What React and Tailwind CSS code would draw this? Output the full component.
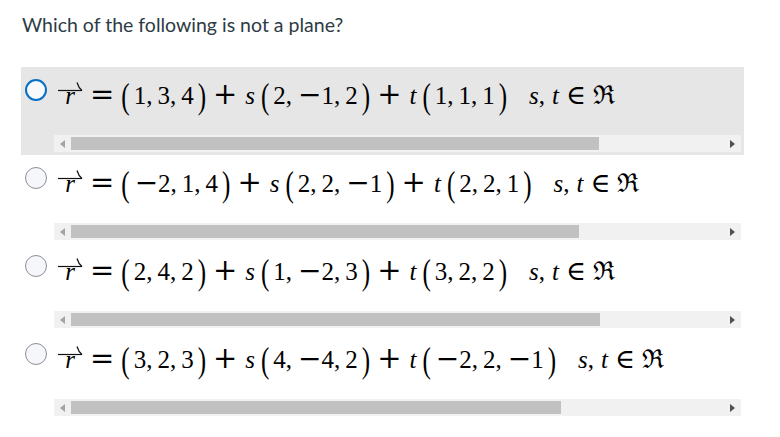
const options = [
  { a: ["1", "3", "4"], b: ["2", "−1", "2"], c: ["1", "1", "1"], thumb: 528, selected: true },
  { a: ["−2", "1", "4"], b: ["2", "2", "−1"], c: ["2", "2", "1"], thumb: 508 },
  { a: ["2", "4", "2"], b: ["1", "−2", "3"], c: ["3", "2", "2"], thumb: 529 },
  { a: ["3", "2", "3"], b: ["4", "−4", "2"], c: ["−2", "2", "−1"], thumb: 490 },
];

const sym = "font-['DejaVu_Serif',serif] font-light";

function Paren({ children }) {
  return (
    <span className="inline-block leading-none scale-y-[1.45] origin-center px-[1px]">{children}</span>
  );
}

function Num({ v }) {
  if (v.startsWith("−")) {
    return (
      <span className="inline-flex items-baseline">
        <span className={`${sym} text-[28px] ml-[1px]`}>−</span>
        <span>{v.slice(1)}</span>
      </span>
    );
  }
  return <span>{v}</span>;
}

function Tuple({ items }) {
  return (
    <span className="inline-flex items-baseline">
      <Paren>(</Paren>
      <span className="ml-[3px]" />
      {items.map((v, i) => (
        <span key={i} className="inline-flex items-baseline">
          <Num v={v} />
          {i < items.length - 1 && <span className="mr-[5px]">,</span>}
        </span>
      ))}
      <span className="mr-[3px]" />
      <Paren>)</Paren>
    </span>
  );
}

function VecR() {
  return (
    <span className="relative inline-block w-[26px] text-center italic leading-none">
      r
      <svg className="absolute left-0 top-[-2px]" width="26" height="11" viewBox="0 0 26 11" fill="none">
        <path d="M1 9.5H25" stroke="#111" strokeWidth="1.2" />
        <path d="M25 9.5C22.5 7.5 21 5 20 1.5" stroke="#111" strokeWidth="1.2" />
      </svg>
    </span>
  );
}

function Expr({ o }) {
  return (
    <div className="flex items-baseline font-['Liberation_Serif','Times_New_Roman',serif] text-[25px] leading-[25px] text-black whitespace-nowrap">
      <VecR />
      <span className={`${sym} text-[29px] ml-[7px] mr-[6px]`}>=</span>
      <Tuple items={o.a} />
      <span className={`${sym} text-[29px] ml-[6px] mr-[8px]`}>+</span>
      <span className="italic mr-[5px]">s</span>
      <Tuple items={o.b} />
      <span className={`${sym} text-[29px] ml-[6px] mr-[8px]`}>+</span>
      <span className="italic mr-[5px]">t</span>
      <Tuple items={o.c} />
      <span className="ml-[21px] italic">s</span>
      <span className="mr-[7px]">,</span>
      <span className="italic">t</span>
      <span className={`${sym} text-[27px] ml-[7px] mr-[7px]`}>∈</span>
      <span className="font-['DejaVu_Serif',serif] text-[26px]">ℜ</span>
    </div>
  );
}

function Radio({ selected }) {
  return selected ? (
    <div className="w-[22px] h-[22px] rounded-full border-[2.5px] border-[#0770c7] bg-[#f7f9fd] shrink-0" />
  ) : (
    <div className="w-[22px] h-[22px] rounded-full border-[1.5px] border-[#8c8f94] bg-[#f6f7fb] shrink-0" />
  );
}

function Scrollbar({ thumb }) {
  return (
    <div className="ml-[33px] w-[687px] h-[17px] bg-[#f1f1f1] flex items-center">
      <div className="w-[17px] h-full flex items-center justify-center">
        <svg width="5" height="8" viewBox="0 0 5 8">
          <polygon points="5,0 5,8 0,4" fill="#a3a3a3" />
        </svg>
      </div>
      <div className="h-[13px] bg-[#c1c1c1]" style={{ width: thumb }} />
      <div className="flex-1" />
      <div className="w-[17px] h-full flex items-center justify-center">
        <svg width="5" height="8" viewBox="0 0 5 8">
          <polygon points="0,0 0,8 5,4" fill="#505050" />
        </svg>
      </div>
    </div>
  );
}

function Option({ o }) {
  return (
    <div className={`h-[88px] flex flex-col ${o.selected ? "bg-[#e6e6e6]" : ""}`}>
      <div className="h-[68px] flex items-start">
        <div className="mt-[12px] ml-[4px]">
          <Radio selected={o.selected} />
        </div>
        <div className="ml-[10px] mt-[15px]">
          <Expr o={o} />
        </div>
      </div>
      <Scrollbar thumb={o.thumb} />
    </div>
  );
}

export default function App() {
  return (
    <div className="w-[780px] h-[437px] bg-white overflow-hidden font-['Lato','Liberation_Sans',sans-serif]">
      <div className="h-[67px] pl-[22px] pt-[13px] text-[19.5px] leading-[24px] text-[#2d3b45]">
        Which of the following is not a plane?
      </div>
      <div className="ml-[21px] w-[723px]">
        {options.map((o, i) => (
          <Option key={i} o={o} />
        ))}
      </div>
    </div>
  );
}
